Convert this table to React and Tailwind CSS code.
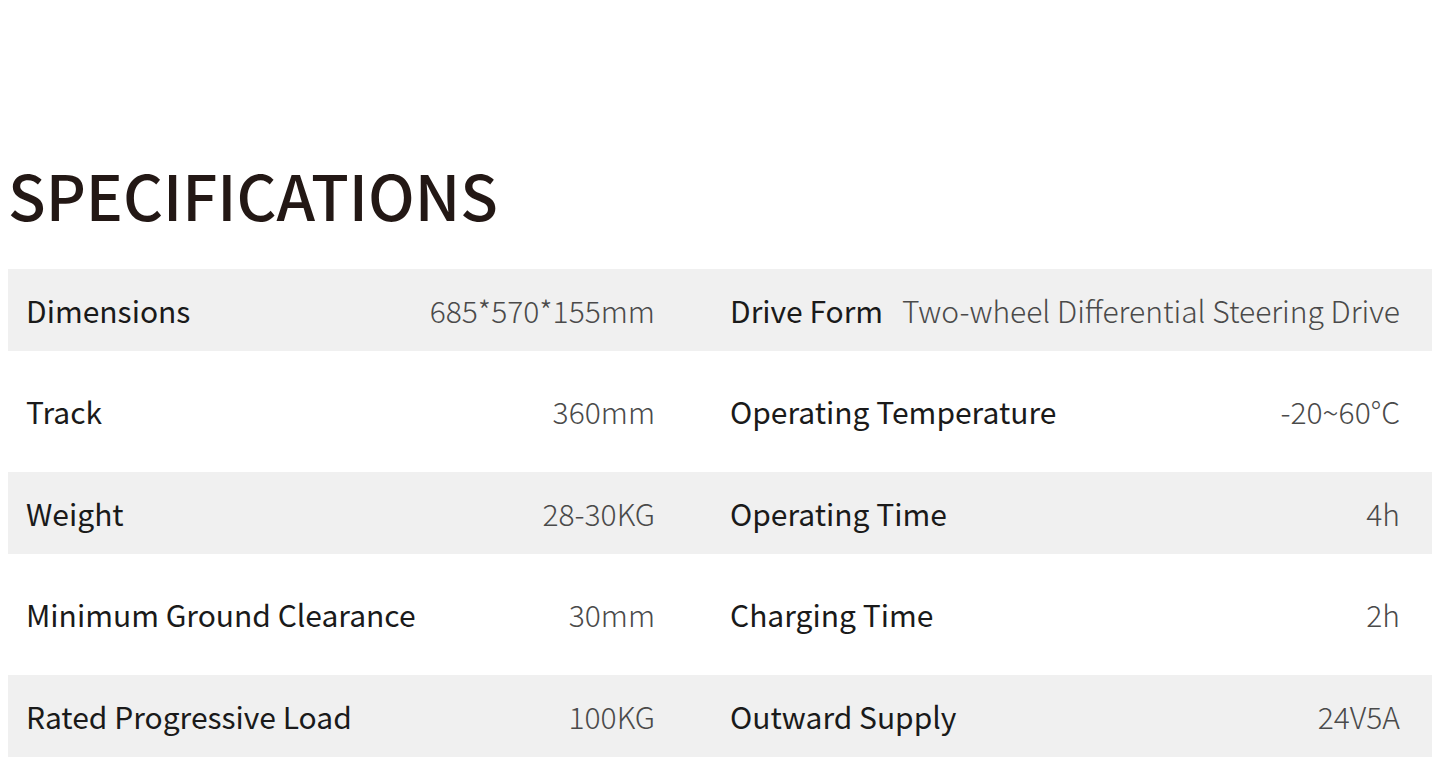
const specs = [
  ['Dimensions', '685*570*155mm', 'Drive Form', 'Two-wheel Differential Steering Drive'],
  ['Track', '360mm', 'Operating Temperature', '-20~60°C'],
  ['Weight', '28-30KG', 'Operating Time', '4h'],
  ['Minimum Ground Clearance', '30mm', 'Charging Time', '2h'],
  ['Rated Progressive Load', '100KG', 'Outward Supply', '24V5A'],
];

export default function App() {
  return (
    <div
      className="w-[1440px] h-[758px] overflow-hidden bg-white"
      style={{ fontFamily: '"Noto Sans CJK SC", "Noto Sans", sans-serif' }}
    >
      <h1 className="pt-[150px] pl-[8px] text-[62px] leading-[88px] text-[#231815] font-medium">
        SPECIFICATIONS
      </h1>
      <div className="mt-[31px] ml-[8px] w-[1424px] flex flex-col gap-[19.5px]">
        {specs.map(([l1, v1, l2, v2], i) => (
          <div
            key={l1}
            className={`h-[82px] grid grid-cols-2 items-center text-[30px] ${
              i % 2 === 0 ? 'bg-[#f0f0f0]' : 'bg-white'
            }`}
          >
            <div className="flex items-center justify-between pl-[18px] pr-[65px]">
              <span className="text-[#1a1a1a]">{l1}</span>
              <span className="text-[#4a4a4a] font-light">{v1}</span>
            </div>
            <div className="flex items-center justify-between pl-[10px] pr-[32px]">
              <span className="text-[#1a1a1a]">{l2}</span>
              <span className="text-[#4a4a4a] font-light">{v2}</span>
            </div>
          </div>
        ))}
      </div>
    </div>
  );
}
